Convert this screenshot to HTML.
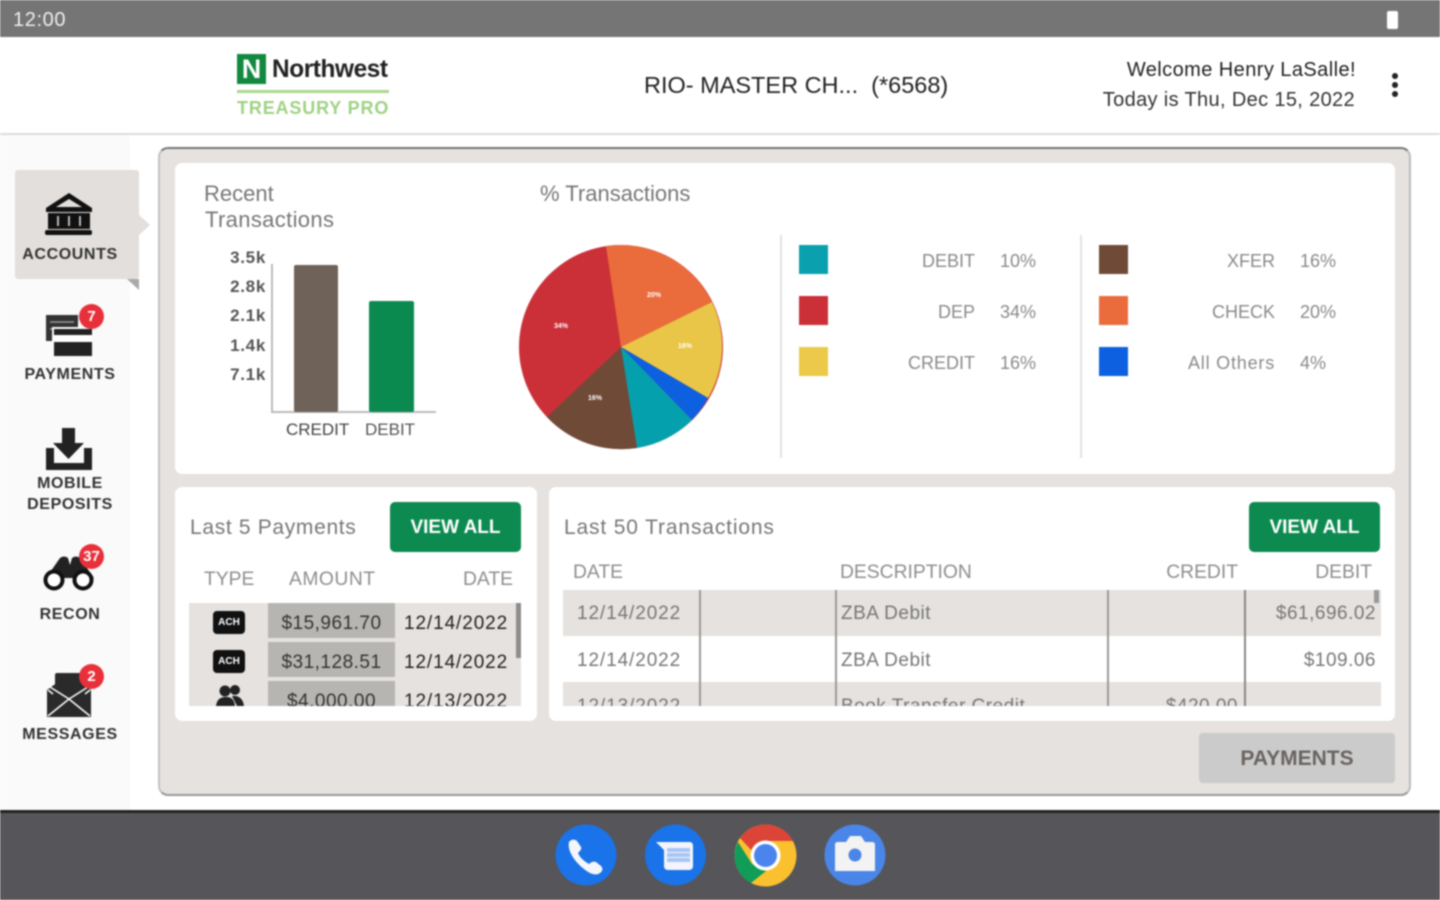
<!DOCTYPE html>
<html><head><meta charset="utf-8"><style>
html,body{margin:0;padding:0;width:1440px;height:900px;overflow:hidden;background:#fff}
body{font-family:"Liberation Sans",sans-serif;position:relative}
#w{position:absolute;left:0;top:0;width:1440px;height:900px;filter:blur(.7px);overflow:hidden}
.a,.t{position:absolute}
.t{white-space:nowrap;line-height:1}
.r{text-align:right}.c{text-align:center}
.n{font-size:16px;color:#333;font-weight:bold;text-align:center;width:130px;left:5px;letter-spacing:.6px}
.b{width:25px;height:25px;border-radius:50%;background:#e8303a;color:#fff;font-weight:bold;font-size:15px;line-height:25px;text-align:center}
.g{color:#888;font-size:20px}
.k{color:#555;font-size:17px;font-weight:bold;width:50px;text-align:right;left:216px;letter-spacing:.7px}
.lg{color:#8a8a8a;font-size:18px}
.d{color:#8e8e8e;font-size:19.300px}
.e{color:#222;font-size:19px;letter-spacing:.9px}
.vb{background:#0c8a50;border-radius:5px;color:#fff;font-weight:bold;font-size:19px;text-align:center;height:50px;line-height:52px;width:131px}
.ach{left:213px;width:32px;height:23px;background:#111;border-radius:4px;color:#fff;font-size:10px;font-weight:bold;line-height:23px;text-align:center}
.sw{width:29px;height:29px}
</style></head><body><div id="w">
<div class="a" style="left:0;top:0;width:1440px;height:37px;background:#757575"></div>
<div class="t" style="left:13px;top:10px;color:#eee;font-size:20px;letter-spacing:.6px">12:00</div>
<div class="a" style="left:1387px;top:11px;width:11px;height:18px;background:#fff;border-radius:2px"></div>

<div class="a" style="left:0;top:133px;width:1440px;height:2px;background:#dcdcdc"></div>
<div class="a" style="left:237px;top:54px;width:29px;height:30px;background:#12893f"></div>
<div class="t" style="left:237px;top:54px;width:29px;height:30px;color:#fff;font-weight:bold;font-size:27px;line-height:30px;text-align:center">N</div>
<div class="t" style="left:272px;top:57px;color:#222;font-size:25px;font-weight:bold;letter-spacing:-.4px;transform-origin:0 0;transform:scaleX(.975)">Northwest</div>
<div class="a" style="left:237px;top:90px;width:152px;height:3px;background:#a9d98c"></div>
<div class="t" style="left:237px;top:99px;color:#9fd284;font-size:18px;font-weight:bold;letter-spacing:.85px">TREASURY PRO</div>
<div class="t" style="left:644px;top:74px;color:#222;font-size:23.500px">RIO- MASTER CH...&nbsp; (*6568)</div>
<div class="t r" style="right:84px;top:60px;color:#222;font-size:20px;letter-spacing:.43px">Welcome Henry LaSalle!</div>
<div class="t r" style="right:85px;top:90px;color:#333;font-size:20px;letter-spacing:.35px">Today is Thu, Dec 15, 2022</div>
<div class="a" style="left:1392px;top:73px;width:6px;height:6px;border-radius:50%;background:#222"></div>
<div class="a" style="left:1392px;top:82px;width:6px;height:6px;border-radius:50%;background:#222"></div>
<div class="a" style="left:1392px;top:91px;width:6px;height:6px;border-radius:50%;background:#222"></div>

<div class="a" style="left:0;top:135px;width:130px;height:675px;background:#fafafa"></div>
<div class="a" style="left:15px;top:170px;width:124px;height:109px;background:#e2dfdc;border-radius:3px"></div>
<div class="a" style="left:139px;top:215px;width:0;height:0;border-left:11px solid #e2dfdc;border-top:10px solid transparent;border-bottom:10px solid transparent"></div>
<div class="a" style="left:127px;top:279px;width:0;height:0;border-right:12px solid #aaa;border-bottom:11px solid transparent"></div>

<svg class="a" style="left:0;top:135px" width="140" height="640" viewBox="0 135 140 640">
<path d="M69 193L92 208V212H46V208Z" fill="#111"/><path d="M69 199L82 207H56Z" fill="#e2dfdc"/>
<rect x="48" y="213" width="42" height="16" fill="#111"/>
<path d="M58 216v10M69 216v10M80 216v10" stroke="#bdbab7" stroke-width="2"/>
<rect x="45" y="230" width="47" height="5" rx="2" fill="#111"/>
<rect x="46" y="315" width="32" height="26" fill="#333"/>
<path d="M50 322H74M50 329H56" stroke="#999" stroke-width="1.500"/>
<rect x="52" y="327" width="41" height="30" fill="#fafafa"/>
<rect x="54" y="329" width="38" height="27" fill="#222"/>
<rect x="54" y="335" width="38" height="7" fill="#fff"/>
<path d="M62 428H75V443H84L68.500 459L53 443H62Z" fill="#222"/>
<path d="M46 448H54V463H84V448H92V470H46Z" fill="#222"/>
<path d="M46 578L60 558Q64 555 68 558L70 565L72 558Q76 555 80 558L94 578Z" fill="#222"/>
<circle cx="54" cy="580" r="8.500" fill="#fff" stroke="#111" stroke-width="4"/>
<circle cx="83" cy="580" r="8.500" fill="#fff" stroke="#111" stroke-width="4"/>
<path d="M47 690L69 674L91 690V717H47Z" fill="#2a2a2a"/>
<rect x="55" y="673" width="27" height="25" rx="2" fill="#2a2a2a"/>
<path d="M48 690L53 694M90 690L85 694M48 716L69 699L90 716M69 699L50 687M69 699L88 687" fill="none" stroke="#fafafa" stroke-width="1.600"/>
</svg>
<div class="t n" style="top:247px">ACCOUNTS</div>
<div class="t n" style="top:367px">PAYMENTS</div>
<div class="t n" style="top:476px">MOBILE</div>
<div class="t n" style="top:497px">DEPOSITS</div>
<div class="t n" style="top:607px">RECON</div>
<div class="t n" style="top:727px">MESSAGES</div>
<div class="a b" style="left:79px;top:304px">7</div>
<div class="a b" style="left:79px;top:544px">37</div>
<div class="a b" style="left:79px;top:664px">2</div>

<div class="a" style="left:158px;top:147px;width:1249px;height:645px;background:#e5e2df;border:2px solid #c4c4c2;border-top-color:#777;border-bottom-color:#999;border-right-color:#bbb;border-radius:10px"></div>
<div class="a" style="left:175px;top:163px;width:1220px;height:311px;background:#fff;border-radius:7px"></div>
<div class="a" style="left:175px;top:487px;width:362px;height:234px;background:#fff;border-radius:7px"></div>
<div class="a" style="left:549px;top:487px;width:846px;height:234px;background:#fff;border-radius:7px"></div>

<div class="t g" style="left:204px;top:183px;color:#777;font-size:22px">Recent</div>
<div class="t g" style="left:205px;top:209px;color:#777;font-size:22px;letter-spacing:.35px">Transactions</div>
<div class="t g" style="left:540px;top:183px;color:#777;font-size:22px">% Transactions</div>

<div class="t k" style="top:249px">3.5k</div>
<div class="t k" style="top:278px">2.8k</div>
<div class="t k" style="top:307px">2.1k</div>
<div class="t k" style="top:337px">1.4k</div>
<div class="t k" style="top:366px">7.1k</div>
<div class="a" style="left:271px;top:264px;width:2px;height:149px;background:#bbb"></div>
<div class="a" style="left:271px;top:411px;width:165px;height:2px;background:#bbb"></div>
<div class="a" style="left:294px;top:265px;width:44px;height:147px;background:#6f6259;border-radius:2px"></div>
<div class="a" style="left:369px;top:301px;width:45px;height:111px;background:#0b8a50;border-radius:2px"></div>
<div class="t" style="left:286px;top:421px;color:#444;font-size:17px">CREDIT</div>
<div class="t" style="left:365px;top:421px;color:#555;font-size:17px">DEBIT</div>

<svg class="a" style="left:510px;top:235px" width="225" height="225" viewBox="510 235 225 225">
<circle cx="621" cy="347" r="102" fill="#cb3038"/>
<path d="M621 347L606 246A102 102 0 0 1 712 302Z" fill="#ea6b3c"/>
<path d="M621 347L712 302A102 102 0 0 1 708 398Z" fill="#e9c647"/>
<path d="M621 347L708 398A102 102 0 0 1 692 420Z" fill="#0d60e0"/>
<path d="M621 347L692 420A102 102 0 0 1 637 448Z" fill="#05a0ad"/>
<path d="M621 347L637 448A102 102 0 0 1 547 417Z" fill="#6e4a37"/>
<text x="654" y="297" fill="#fff" font-size="7" font-weight="bold" text-anchor="middle">20%</text>
<text x="685" y="348" fill="#fff" font-size="7" font-weight="bold" text-anchor="middle">16%</text>
<text x="561" y="328" fill="#fff" font-size="7" font-weight="bold" text-anchor="middle">34%</text>
<text x="595" y="400" fill="#fff" font-size="7" font-weight="bold" text-anchor="middle">16%</text>
</svg>

<div class="a" style="left:780px;top:235px;width:2px;height:223px;background:#e5e2df"></div>
<div class="a" style="left:1080px;top:235px;width:2px;height:223px;background:#e5e2df"></div>
<div class="a sw" style="left:799px;top:245px;background:#0aa0ae"></div>
<div class="a sw" style="left:799px;top:296px;background:#cb3038"></div>
<div class="a sw" style="left:799px;top:347px;background:#ecc94b"></div>
<div class="a sw" style="left:1099px;top:245px;background:#6e4a37"></div>
<div class="a sw" style="left:1099px;top:296px;background:#ea6b3c"></div>
<div class="a sw" style="left:1099px;top:347px;background:#0d60e0"></div>
<div class="t lg r" style="right:465px;top:252px">DEBIT</div><div class="t lg" style="left:1000px;top:252px">10%</div>
<div class="t lg r" style="right:465px;top:303px">DEP</div><div class="t lg" style="left:1000px;top:303px">34%</div>
<div class="t lg r" style="right:465px;top:354px">CREDIT</div><div class="t lg" style="left:1000px;top:354px">16%</div>
<div class="t lg r" style="right:165px;top:252px">XFER</div><div class="t lg" style="left:1300px;top:252px">16%</div>
<div class="t lg r" style="right:165px;top:303px">CHECK</div><div class="t lg" style="left:1300px;top:303px">20%</div>
<div class="t lg r" style="right:165px;top:354px;letter-spacing:.8px">All Others</div><div class="t lg" style="left:1300px;top:354px">4%</div>

<div class="t" style="left:190px;top:517px;color:#777;font-size:21px;letter-spacing:.67px">Last 5 Payments</div>
<div class="a vb" style="left:390px;top:502px">VIEW ALL</div>
<div class="t d" style="left:204px;top:570px">TYPE</div>
<div class="t d" style="left:289px;top:570px;letter-spacing:.5px">AMOUNT</div>
<div class="t d r" style="right:927px;top:570px">DATE</div>

<div class="a" style="left:189px;top:603px;width:332px;height:103px;background:#e5e2df;overflow:hidden">
<div class="a" style="left:79px;top:0;width:127px;height:35px;background:#b7b5b2"></div>
<div class="a" style="left:79px;top:39px;width:127px;height:35px;background:#b7b5b2"></div>
<div class="a" style="left:79px;top:78px;width:127px;height:35px;background:#b7b5b2"></div>
<div class="a" style="left:327px;top:0;width:5px;height:55px;background:#8d8d8d"></div>
<div class="t e c" style="left:79px;top:11px;width:127px;color:#333;letter-spacing:.5px">$15,961.70</div>
<div class="t e c" style="left:79px;top:50px;width:127px;color:#333;letter-spacing:.5px">$31,128.51</div>
<div class="t e c" style="left:79px;top:89px;width:127px;color:#333;letter-spacing:.5px">$4,000.00</div>
<div class="t e" style="left:215px;top:11px">12/14/2022</div>
<div class="t e" style="left:215px;top:50px">12/14/2022</div>
<div class="t e" style="left:215px;top:89px">12/13/2022</div>
<svg class="a" style="left:25px;top:80px" width="32" height="24"><circle cx="11" cy="8" r="5.500" fill="#222"/><circle cx="21" cy="7" r="5" fill="#222"/><path d="M2 23C3 15 8 14 12 14C16 14 20 15 21 23Z" fill="#222"/><path d="M18 13C24 12 29 15 30 23H23Z" fill="#222"/></svg>
</div>
<div class="a ach" style="left:213px;top:611px">ACH</div>
<div class="a ach" style="left:213px;top:650px">ACH</div>

<div class="t" style="left:564px;top:517px;color:#777;font-size:21px;letter-spacing:.85px">Last 50 Transactions</div>
<div class="a vb" style="left:1249px;top:502px">VIEW ALL</div>
<div class="t d" style="left:573px;top:563px">DATE</div>
<div class="t d" style="left:840px;top:563px">DESCRIPTION</div>
<div class="t d r" style="right:202px;top:563px">CREDIT</div>
<div class="t d r" style="right:68px;top:563px">DEBIT</div>

<div class="a" style="left:563px;top:590px;width:818px;height:116px;overflow:hidden;color:#777;font-size:19px;letter-spacing:.5px">
<div class="a" style="left:0;top:0;width:818px;height:46px;background:#e5e2df"></div>
<div class="a" style="left:0;top:92px;width:818px;height:30px;background:#e5e2df"></div>
<div class="a" style="left:136px;top:0;width:2px;height:116px;background:#999"></div>
<div class="a" style="left:272px;top:0;width:2px;height:116px;background:#999"></div>
<div class="a" style="left:544px;top:0;width:2px;height:116px;background:#999"></div>
<div class="a" style="left:681px;top:0;width:2px;height:116px;background:#888"></div>
<div class="a" style="left:811px;top:0;width:5px;height:13px;background:#999"></div>
<div class="t" style="left:14px;top:14px;letter-spacing:.9px">12/14/2022</div>
<div class="t" style="left:14px;top:61px;letter-spacing:.9px">12/14/2022</div>
<div class="t" style="left:14px;top:107px;letter-spacing:.9px">12/13/2022</div>
<div class="t" style="left:278px;top:14px">ZBA Debit</div>
<div class="t" style="left:278px;top:61px">ZBA Debit</div>
<div class="t" style="left:278px;top:107px">Book Transfer Credit</div>
<div class="t r" style="right:143px;top:107px">$420.00</div>
<div class="t r" style="right:5px;top:14px">$61,696.02</div>
<div class="t r" style="right:5px;top:61px">$109.06</div>
</div>

<div class="a" style="left:1199px;top:733px;width:196px;height:50px;background:#cbcbcb;border-radius:4px;color:#6a6462;font-weight:bold;font-size:21px;line-height:52px;text-align:center">PAYMENTS</div>

<div class="a" style="left:0;top:810px;width:1440px;height:90px;background:#55555a;border-top:3px solid #222;box-sizing:border-box"></div>
<svg class="a" style="left:540px;top:810px" width="360" height="90" viewBox="540 810 360 90">
<circle cx="586" cy="855" r="30.500" fill="#1a73e8"/>
<path d="M569 842C571 839 575 839 577 841L581 847C582 849 580 851 578 853C580 858 584 861 589 864C591 862 594 861 596 862L601 866C603 868 603 871 600 873C596 876 590 874 584 869C575 862 567 851 569 842Z" fill="#f4f6fb"/>
<circle cx="675.500" cy="855" r="30.500" fill="#1a73e8"/>
<path d="M656 842H690C692 842 693 844 693 846V866C693 869 691 870 689 870H668C665 870 664 868 664 866V850Z" fill="#f3f5fb"/>
<path d="M667 850H690M667 855H690M667 860H690" stroke="#a9c5f5" stroke-width="4"/>
<circle cx="765.500" cy="855.500" r="31" fill="#fbc02d"/>
<path d="M765.500 824.500A31 31 0 0 1 793 841H766A15 15 0 0 0 752 851L740 838A31 31 0 0 1 765.500 824.500Z" fill="#db4437"/>
<path d="M738 842L752 864L766 871L751 883A31 31 0 0 1 734.500 856A31 31 0 0 1 738 842Z" fill="#0f9d58"/>
<circle cx="765.500" cy="855.500" r="15" fill="#fff"/><circle cx="765.500" cy="855.500" r="11.500" fill="#4c84ee"/>
<circle cx="855" cy="855" r="30.500" fill="#4a86e8"/>
<path d="M838 842H846L850 836H861L865 842H872C874 842 875 843 875 845V871H835V845C835 843 836 842 838 842Z" fill="#f3f3f3"/>
<circle cx="855" cy="855" r="6.500" fill="#4a86e8"/>
</svg>
</div></body></html>
